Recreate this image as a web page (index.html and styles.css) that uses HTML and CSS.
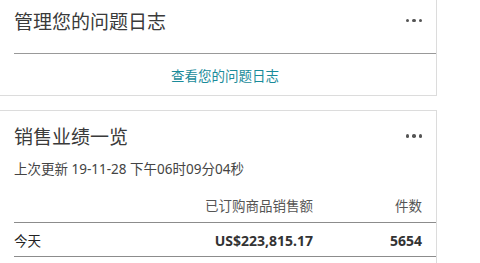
FILE: index.html
```html
<!DOCTYPE html>
<html>

<head>
    <meta charset="utf-8">
    <title>Seller Central | 首页</title>
    <link rel="stylesheet" href="styles.css">
</head>

<body>
    <div class="card" id="issue-card">
        <div class="card-head">
            <h2 class="card-title">管理您的问题日志</h2>
            <span class="more"><i></i><i></i><i></i></span>
        </div>
        <div class="card-link">
            <a href="#">查看您的问题日志</a>
        </div>
    </div>

    <div class="card" id="sales-card">
        <div class="card-head">
            <h2 class="card-title">销售业绩一览</h2>
            <span class="more"><i></i><i></i><i></i></span>
        </div>
        <p class="updated">上次更新 19-11-28 下午06时09分04秒</p>

        <div class="sales-row sales-head">
            <span></span>
            <span class="num">已订购商品销售额</span>
            <span class="num">件数</span>
        </div>
        <div class="sales-row">
            <span>今天</span>
            <span class="num strong">US$223,815.17</span>
            <span class="num strong">5654</span>
        </div>
    </div>
</body>

</html>
```

FILE: styles.css
```css
body {
    margin: 0;
    background-color: white;
    font-family: "Noto Sans", "Noto Sans CJK SC", sans-serif;
    color: #333;
}

.card {
    box-sizing: border-box;
    width: 438px;
    margin-left: -1px;
    padding-left: 14px;
    border: 1px solid #dcdcdc;
    background-color: white;
}

#issue-card {
    margin-top: -1px;
}

#sales-card {
    margin-top: 14px;
    padding-bottom: 20px;
}

.card-head {
    display: flex;
    justify-content: space-between;
    align-items: center;
    padding-right: 14px;
}

#issue-card .card-head {
    height: 54px;
    padding-bottom: 10px;
    box-sizing: border-box;
    border-bottom: 1px solid #999;
}

#sales-card .card-head {
    padding-top: 14px;
}

.card-title {
    margin: 0;
    font-size: 19px;
    line-height: 24px;
    font-weight: normal;
    color: #3a3a3a;
}

.more {
    display: flex;
    gap: 3px;
    margin-top: -2px;
}

.more i {
    width: 3.5px;
    height: 3.5px;
    border-radius: 50%;
    background-color: #555;
}

.card-link {
    height: 41px;
    display: flex;
    align-items: center;
    justify-content: center;
}

.card-link a {
    font-size: 13.5px;
    color: #1a8b9a;
    text-decoration: none;
}

.updated {
    margin: 10px 0 0 0;
    font-size: 13.5px;
    line-height: 20px;
    color: #444;
}

.sales-row {
    display: grid;
    grid-template-columns: 1fr 200px 109px;
    padding-right: 14px;
    border-bottom: 1px solid #8c8c8c;
    font-size: 13.5px;
    line-height: 20px;
    color: #222;
}

.sales-head {
    margin-top: 17px;
    padding-bottom: 6px;
    color: #555;
}

.sales-row + .sales-row {
    padding-top: 8px;
    padding-bottom: 5px;
}

.num {
    text-align: right;
}

.strong {
    font-weight: bold;
    font-size: 14px;
    color: #333;
}
```
